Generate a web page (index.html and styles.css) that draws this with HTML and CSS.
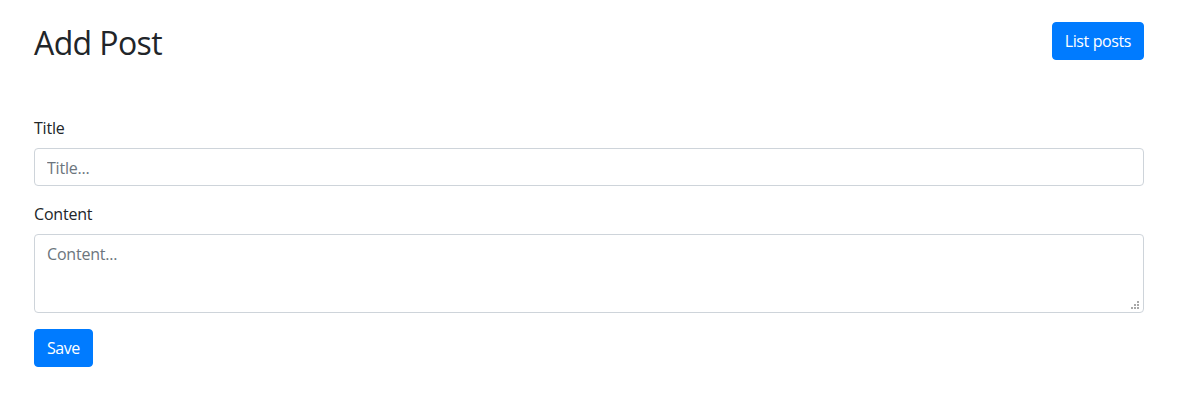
FILE: index.html
```html
<!DOCTYPE html>
<html lang="en">
<head>
<meta charset="utf-8">
<title>Add Post</title>
<link rel="stylesheet" href="styles.css">
</head>
<body>
<div class="container">
  <div class="header">
    <h2 class="title">Add Post</h2>
    <a class="btn btn-list" href="#">List posts</a>
  </div>
  <form class="form">
    <div class="form-group">
      <label class="label" for="title">Title</label>
      <input class="control" id="title" type="text" placeholder="Title...">
    </div>
    <div class="form-group">
      <label class="label" for="content">Content</label>
      <div class="area-wrap">
        <textarea class="control area" id="content" placeholder="Content..."></textarea>
        <svg class="grip" width="9" height="9" viewBox="0 0 9 9" aria-hidden="true">
          <rect x="6" y="0" width="2" height="2"/>
          <rect x="3" y="3" width="2" height="2"/>
          <rect x="6" y="3" width="2" height="2"/>
          <rect x="0" y="6" width="2" height="2"/>
          <rect x="3" y="6" width="2" height="2"/>
          <rect x="6" y="6" width="2" height="2"/>
        </svg>
      </div>
    </div>
    <button class="btn btn-save" type="button">Save</button>
  </form>
</div>
</body>
</html>
```

FILE: styles.css
```css
* { box-sizing: border-box; }
html, body { margin: 0; padding: 0; background: #fff; }
body {
  font-family: "Open Sans", "Noto Sans", "Liberation Sans", sans-serif;
  font-size: 16px;
  line-height: 1.5;
  color: #212529;
}
.container {
  width: 1110px;
  margin-left: 34px;
  padding-top: 22px;
}
.header {
  display: flex;
  justify-content: space-between;
  align-items: center;
  height: 38px;
  margin-bottom: 56px;
}
.title {
  margin: 0;
  padding-top: 4px;
  height: 38px;
  font-size: 32px;
  font-weight: 400;
  line-height: 34px;
  letter-spacing: -0.6px;
}
.btn {
  display: inline-block;
  height: 38px;
  padding: 6px 12px;
  font-family: inherit;
  font-size: 16px;
  line-height: 24px;
  color: #fff;
  background: #007bff;
  border: 1px solid #007bff;
  border-radius: 4px;
  text-decoration: none;
  cursor: pointer;
  letter-spacing: -0.4px;
}
.btn-save { letter-spacing: -0.5px; }
.form-group { margin-bottom: 16px; }
.label {
  display: block;
  margin-bottom: 8px;
  height: 24px;
  padding-top: 1px;
  line-height: 23px;
  letter-spacing: -0.2px;
}
.control {
  display: block;
  width: 100%;
  height: 38px;
  padding: 7px 12px 5px;
  font-family: inherit;
  font-size: 16px;
  line-height: 24px;
  color: #495057;
  background: #fff;
  border: 1px solid #ced4da;
  border-radius: 4px;
  margin: 0;
  letter-spacing: -0.2px;
}
.control::placeholder { color: #6c757d; opacity: 1; }
.area-wrap { position: relative; }
.area {
  height: 79px;
  resize: none;
}
.grip {
  position: absolute;
  right: 4px;
  bottom: 3px;
  fill: #a8a8a8;
}
```
